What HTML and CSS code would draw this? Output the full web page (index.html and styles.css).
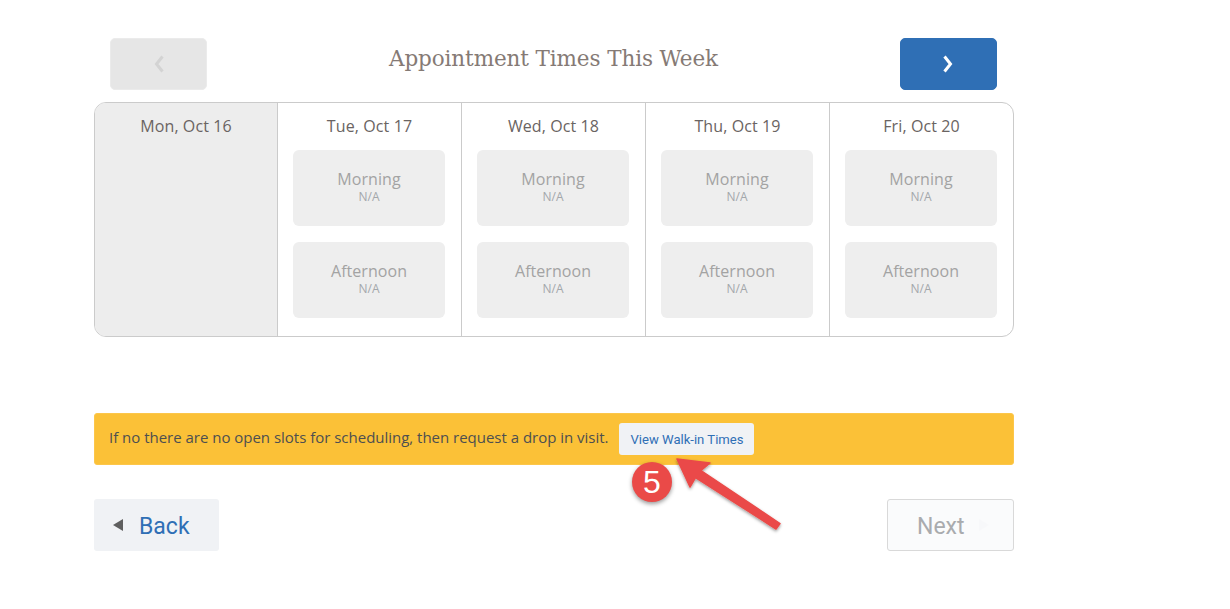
FILE: index.html
```html
<!DOCTYPE html>
<html lang="en">
<head>
<meta charset="utf-8">
<title>Appointment Times This Week</title>
<link rel="stylesheet" href="styles.css">
</head>
<body>
<main class="page">
  <header class="week-head">
    <button class="week-btn week-btn-off"><svg class="chev" viewBox="0 0 12 18"><path d="M9.5 1.5 3.5 9l6 7.5" /></svg></button>
    <h1 class="title">Appointment Times This Week</h1>
    <button class="week-btn week-btn-on"><svg class="chev" viewBox="0 0 12 18"><path d="M2.5 1.5 8.5 9l-6 7.5" /></svg></button>
  </header>
  <section class="calendar">
    <div class="day day-off"><div class="day-name">Mon, Oct 16</div></div>
    <div class="day"><div class="day-name">Tue, Oct 17</div>
      <div class="slot"><span class="slot-name">Morning</span><span class="slot-val">N/A</span></div>
      <div class="slot"><span class="slot-name">Afternoon</span><span class="slot-val">N/A</span></div></div>
    <div class="day"><div class="day-name">Wed, Oct 18</div>
      <div class="slot"><span class="slot-name">Morning</span><span class="slot-val">N/A</span></div>
      <div class="slot"><span class="slot-name">Afternoon</span><span class="slot-val">N/A</span></div></div>
    <div class="day"><div class="day-name">Thu, Oct 19</div>
      <div class="slot"><span class="slot-name">Morning</span><span class="slot-val">N/A</span></div>
      <div class="slot"><span class="slot-name">Afternoon</span><span class="slot-val">N/A</span></div></div>
    <div class="day"><div class="day-name">Fri, Oct 20</div>
      <div class="slot"><span class="slot-name">Morning</span><span class="slot-val">N/A</span></div>
      <div class="slot"><span class="slot-name">Afternoon</span><span class="slot-val">N/A</span></div></div>
  </section>
  <section class="alert">
    <span class="alert-text">If no there are no open slots for scheduling, then request a drop in visit.</span>
    <button class="walkin">View Walk-in Times</button>
  </section>
  <nav class="foot">
    <button class="nav-btn back"><svg class="tri" viewBox="0 0 10 12"><path d="M10 0v12L0 6z"/></svg><span class="nav-label">Back</span></button>
    <button class="nav-btn next"><span class="nav-label">Next</span><svg class="tri" viewBox="0 0 10 12"><path d="M0 0v12l10-6z"/></svg></button>
  </nav>
  <svg class="arrow" viewBox="0 0 120 80" aria-hidden="true">
    <defs><filter id="sh" x="-20%" y="-20%" width="140%" height="140%"><feDropShadow dx="0" dy="1.5" stdDeviation="1.5" flood-color="#000" flood-opacity=".4"/></filter></defs>
    <path filter="url(#sh)" d="M7 9 40 13 31 20.5 110 73.5 106 79 25.5 27.5 20 37z" stroke="#ea4a48" stroke-width="1.5" stroke-linejoin="round" fill="#ea4a48"/>
  </svg>
  <div class="badge">5</div>
</main>
</body>
</html>
```
FILE: styles.css
```css
* { box-sizing: border-box; }
html, body { margin: 0; padding: 0; background: #fff; }
body { height: 609px; overflow: hidden; font-family: "Open Sans", sans-serif; }
.page { position: relative; width: 920px; margin-left: 94px; padding-top: 38px; }
button { font-family: inherit; cursor: pointer; }

.week-head { display: flex; justify-content: space-between; align-items: flex-start; padding: 0 17px 0 16px; height: 64px; }
.week-btn { width: 97px; height: 52px; border-radius: 5px; border: 1px solid transparent; display: flex; align-items: center; justify-content: center; padding: 0; }
.week-btn-off { background: #e6e6e6; border-color: #ebebeb; }
.week-btn-off .chev path { stroke: #d3d3d3; }
.week-btn-on { background: #2f6fb5; border-color: #2f6fb5; }
.week-btn-on .chev path { stroke: #fff; }
.chev { width: 12px; height: 18px; }
.chev path { fill: none; stroke-width: 3; }
.title { margin: 4px 0 0; font-family: "DejaVu Serif", serif; font-weight: 400; font-size: 21.5px; line-height: 34px; color: #857a75; letter-spacing: -.1px; }

.calendar { display: grid; grid-template-columns: 183px repeat(3, 184px) 1fr; height: 235px; border: 1px solid #cbcbcb; border-radius: 12px; overflow: hidden; }
.day { border-right: 1px solid #cbcbcb; padding: 0 15px; }
.day:last-child { border-right: 0; }
.day-off { background: #ededed; }
.day-name { height: 47px; padding-top: 11px; text-align: center; font-size: 16px; line-height: 24px; color: #6a6462; letter-spacing: .1px; }
.slot { display: flex; flex-direction: column; align-items: center; width: 152px; height: 76px; margin-bottom: 16px; padding-top: 18px; border-radius: 6px; background: #eeeeee; color: #a3a3a3; }
.slot-name { font-size: 16px; line-height: 22px; letter-spacing: .05px; }
.slot-val { font-size: 12px; line-height: 14px; color: #a3a7ab; }

.alert { display: flex; align-items: center; height: 52px; margin-top: 76px; padding: 0 15px; background: #fbc137; border: 1px solid #fcc64a; border-radius: 3px; }
.alert-text { font-size: 15px; line-height: 20px; margin-bottom: 4px; margin-left: -1px; color: #4d4f50; letter-spacing: -.015px; }
.walkin { height: 32px; width: 135px; margin-left: 11px; padding: 0; background: #f0f2f5; border: 0; border-radius: 3px; font-family: Roboto, sans-serif; font-size: 13.1px; color: #2f6fb5; }

.foot { display: flex; justify-content: space-between; margin-top: 34px; }
.nav-btn { display: flex; align-items: center; height: 52px; border-radius: 3px; font-family: Roboto, sans-serif; font-size: 23px; padding: 0; }
.nav-label { padding-top: 3px; }
.back { width: 125px; background: #f0f2f5; border: 0; color: #2f6fb5; padding-left: 19px; gap: 16px; }
.back .tri { fill: #5f5f5f; }
.next { width: 127px; background: #fafbfc; border: 1px solid #d9d9d9; color: #a9abae; padding-left: 29px; gap: 14px; }
.next .tri { fill: #f7f8fa; }
.tri { width: 10px; height: 12px; }

.arrow { position: absolute; left: 576px; top: 450px; width: 120px; height: 80px; overflow: visible; }
.badge { position: absolute; left: 538px; top: 462px; width: 40px; height: 40px; border-radius: 50%; background: #ea4a48; box-shadow: 0 2px 4px rgba(0,0,0,.4); color: #fff; font-family: "Liberation Sans", sans-serif; font-size: 32px; line-height: 40px; text-align: center; }
```
